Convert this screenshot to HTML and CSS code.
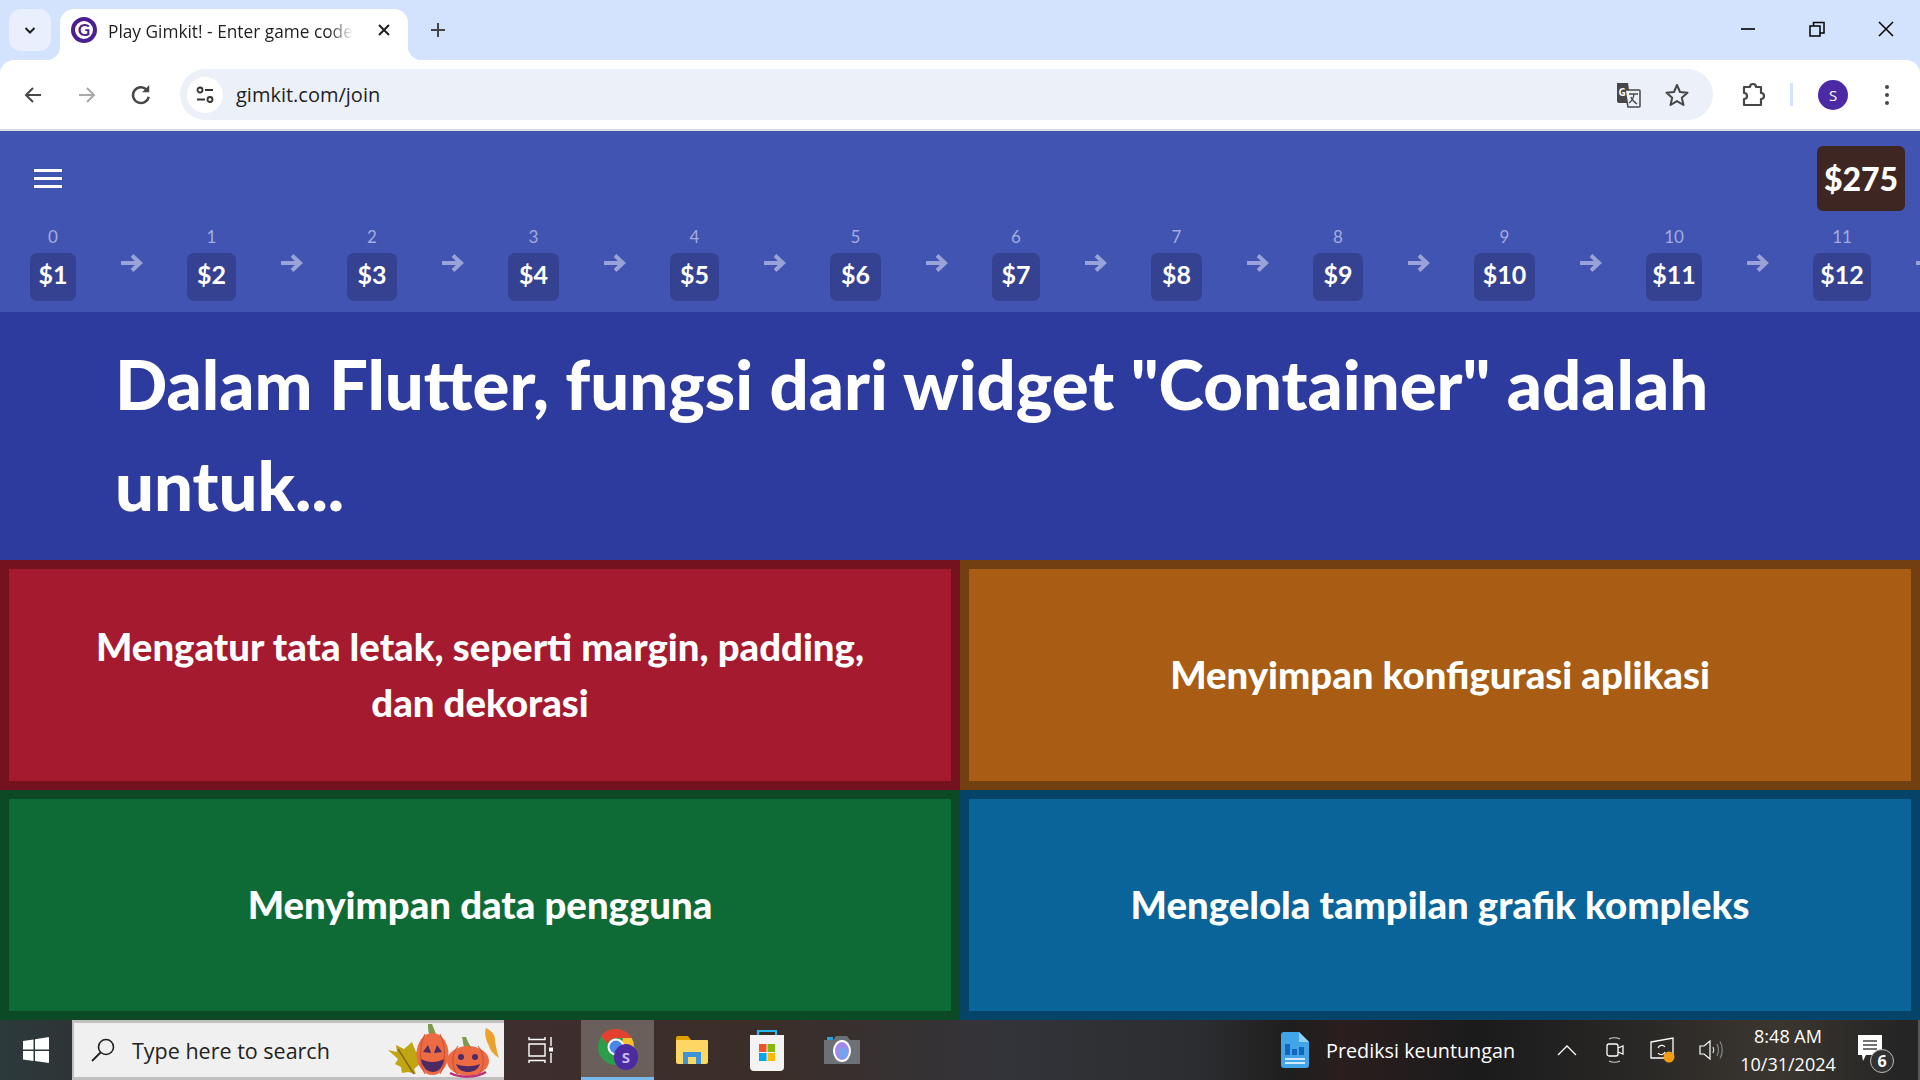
FILE: index.html
```html
<!DOCTYPE html>
<html>
<head lang="en">
    <meta charset="UTF-8">
    <title>Play Gimkit! - Enter game code</title>
    <link rel="stylesheet" href="styles.css">
</head>
<body>
<div id="browser">
  <div class="tabstrip">
    <div class="tab-search">
      <svg width="14" height="14" viewBox="0 0 14 14"><path d="M2.5 5l4.5 4.5L11.500 5" fill="none" stroke="#1f1f1f" stroke-width="2"/></svg>
    </div>
    <div class="tab">
      <svg class="favicon" width="26" height="26" viewBox="0 0 26 26">
        <circle cx="13" cy="13" r="11" fill="#fff" stroke="#4b1f8f" stroke-width="4"/>
        <text x="13" y="18.500" text-anchor="middle" class="favicon-g">G</text>
      </svg>
      <div class="tab-title">Play Gimkit! - Enter game code</div>
      <svg class="tab-close" width="14" height="14" viewBox="0 0 14 14"><path d="M2 2l10 10M12 2L2 12" stroke="#1f1f1f" stroke-width="2"/></svg>
    </div>
    <svg class="new-tab" width="18" height="18" viewBox="0 0 18 18"><path d="M9 2v14M2 9h14" stroke="#444" stroke-width="2"/></svg>
    <div class="win-controls">
      <div class="win-btn"><svg width="16" height="16" viewBox="0 0 16 16"><path d="M1 8h14" stroke="#000" stroke-width="1.600"/></svg></div>
      <div class="win-btn"><svg width="16" height="16" viewBox="0 0 16 16"><path d="M1 5h10v10H1zM4.500 5V1.500h10.500V12H11" fill="none" stroke="#000" stroke-width="1.500"/></svg></div>
      <div class="win-btn"><svg width="16" height="16" viewBox="0 0 16 16"><path d="M1 1l14 14M15 1L1 15" stroke="#000" stroke-width="1.500"/></svg></div>
    </div>
  </div>
  <div class="toolbar">
    <div class="nav-btn"><svg width="20" height="20" viewBox="0 0 20 20"><path d="M18 10H3M10 3l-7 7 7 7" fill="none" stroke="#474747" stroke-width="2"/></svg></div>
    <div class="nav-btn"><svg width="20" height="20" viewBox="0 0 20 20"><path d="M2 10h15M10 3l7 7-7 7" fill="none" stroke="#a8a8a8" stroke-width="2"/></svg></div>
    <div class="nav-btn"><svg width="22" height="22" viewBox="0 0 20 20"><path d="M17 11.500A7.200 7.200 0 1 1 15 5" fill="none" stroke="#474747" stroke-width="2.200"/><path d="M17.500 1v6.500H11z" fill="#474747"/></svg></div>
    <div class="omnibox">
      <div class="site-info">
        <svg width="20" height="20" viewBox="0 0 20 20"><circle cx="5" cy="5" r="2.500" fill="none" stroke="#333" stroke-width="1.800"/><path d="M10 5h8M2 14.500h8" stroke="#333" stroke-width="1.800"/><circle cx="15" cy="14.500" r="2.500" fill="none" stroke="#333" stroke-width="1.800"/></svg>
      </div>
      <div class="url">gimkit.com/join</div>
      <svg class="translate" width="26" height="26" viewBox="0 0 26 26">
        <path d="M2 1h11l3 20H4a2 2 0 0 1-2-2z" fill="#474747"/>
        <path d="M10 8h14a1 1 0 0 1 1 1v15a1 1 0 0 1-1 1H13z" fill="#ebf0f9" stroke="#474747" stroke-width="1.500"/>
        <text x="3.500" y="14" class="translate-g">G</text>
        <path d="M14 12h9M19 12c-.5 4-2 7-5 9M16 15c1 3 3 5 6 7" fill="none" stroke="#474747" stroke-width="1.300"/>
      </svg>
      <svg class="star" width="26" height="26" viewBox="0 0 26 26"><path d="M13 3l3 7 7.500.7-5.700 5 1.700 7.300-6.500-3.900L6.500 23l1.700-7.300-5.700-5L10 10z" fill="none" stroke="#474747" stroke-width="2" stroke-linejoin="round"/></svg>
    </div>
    <div class="extensions"><svg width="26" height="26" viewBox="0 0 26 26"><path d="M4 5h6a3 3 0 0 1 6 0h5v6a3 3 0 0 1 0 6v6H4v-6a3 3 0 0 0 0-6z" fill="none" stroke="#474747" stroke-width="2.200" stroke-linejoin="round"/></svg></div>
    <div class="toolbar-divider"></div>
    <div class="avatar">S</div>
    <div class="dots"><span></span><span></span><span></span></div>
  </div>
</div>

<div id="game">
  <div class="game-header">
    <div class="top-row">
      <div class="hamburger"><span></span><span></span><span></span></div>
      <div class="balance">$275</div>
    </div>
    <div class="ladder">
      <div class="step"><div class="level">0</div><div class="price w46">$1</div></div>
      <svg class="arrow" viewBox="0 0 23 20"><path d="M1 10h19M12 2.500l8 7.500-8 7.500" fill="none" stroke="#9aa3d8" stroke-width="4"/></svg>
      <div class="step"><div class="level">1</div><div class="price w49">$2</div></div>
      <svg class="arrow" viewBox="0 0 23 20"><path d="M1 10h19M12 2.500l8 7.500-8 7.500" fill="none" stroke="#9aa3d8" stroke-width="4"/></svg>
      <div class="step"><div class="level">2</div><div class="price w50">$3</div></div>
      <svg class="arrow" viewBox="0 0 23 20"><path d="M1 10h19M12 2.500l8 7.500-8 7.500" fill="none" stroke="#9aa3d8" stroke-width="4"/></svg>
      <div class="step"><div class="level">3</div><div class="price w51">$4</div></div>
      <svg class="arrow" viewBox="0 0 23 20"><path d="M1 10h19M12 2.500l8 7.500-8 7.500" fill="none" stroke="#9aa3d8" stroke-width="4"/></svg>
      <div class="step"><div class="level">4</div><div class="price w49">$5</div></div>
      <svg class="arrow" viewBox="0 0 23 20"><path d="M1 10h19M12 2.500l8 7.500-8 7.500" fill="none" stroke="#9aa3d8" stroke-width="4"/></svg>
      <div class="step"><div class="level">5</div><div class="price w51">$6</div></div>
      <svg class="arrow" viewBox="0 0 23 20"><path d="M1 10h19M12 2.500l8 7.500-8 7.500" fill="none" stroke="#9aa3d8" stroke-width="4"/></svg>
      <div class="step"><div class="level">6</div><div class="price w48">$7</div></div>
      <svg class="arrow" viewBox="0 0 23 20"><path d="M1 10h19M12 2.500l8 7.500-8 7.500" fill="none" stroke="#9aa3d8" stroke-width="4"/></svg>
      <div class="step"><div class="level">7</div><div class="price w51">$8</div></div>
      <svg class="arrow" viewBox="0 0 23 20"><path d="M1 10h19M12 2.500l8 7.500-8 7.500" fill="none" stroke="#9aa3d8" stroke-width="4"/></svg>
      <div class="step"><div class="level">8</div><div class="price w50">$9</div></div>
      <svg class="arrow" viewBox="0 0 23 20"><path d="M1 10h19M12 2.500l8 7.500-8 7.500" fill="none" stroke="#9aa3d8" stroke-width="4"/></svg>
      <div class="step"><div class="level">9</div><div class="price w61">$10</div></div>
      <svg class="arrow" viewBox="0 0 23 20"><path d="M1 10h19M12 2.500l8 7.500-8 7.500" fill="none" stroke="#9aa3d8" stroke-width="4"/></svg>
      <div class="step"><div class="level">10</div><div class="price w56">$11</div></div>
      <svg class="arrow" viewBox="0 0 23 20"><path d="M1 10h19M12 2.500l8 7.500-8 7.500" fill="none" stroke="#9aa3d8" stroke-width="4"/></svg>
      <div class="step"><div class="level">11</div><div class="price w58">$12</div></div>
      <svg class="arrow" viewBox="0 0 23 20"><path d="M1 10h19M12 2.500l8 7.500-8 7.500" fill="none" stroke="#9aa3d8" stroke-width="4"/></svg>
    </div>
  </div>
  <div class="question">Dalam Flutter, fungsi dari widget "Container" adalah untuk...</div>
  <div class="answers">
    <div class="answer red">Mengatur tata letak, seperti margin, padding, dan dekorasi</div>
    <div class="answer orange">Menyimpan konfigurasi aplikasi</div>
    <div class="answer green">Menyimpan data pengguna</div>
    <div class="answer blue">Mengelola tampilan grafik kompleks</div>
  </div>
</div>

<div id="taskbar">
  <div class="start">
    <svg width="26" height="26" viewBox="0 0 26 26"><path d="M0 4l10.500-1.500v10H0zM12 2.200L26 0v12.500H12zM0 14h10.500v10L0 22.500zM12 14h14v12l-14-2z" fill="#fff"/></svg>
  </div>
  <div class="search">
    <svg width="26" height="26" viewBox="0 0 26 26"><circle cx="16" cy="10" r="7.500" fill="none" stroke="#222" stroke-width="1.600"/><path d="M10.500 15.500L2 24" stroke="#222" stroke-width="1.800"/></svg>
    <div class="search-text">Type here to search</div>
    <svg class="pumpkins" width="116" height="64" viewBox="0 0 116 64">
      <path d="M0 33l9 2-1-7 8 4 8-7 4 10 4-2-2 10 3 3-7 6 2 5-8-2-6 1-1-6-6-3 3-5z" fill="#bfa612"/>
      <path d="M10 32l16 25" stroke="#8a6a1a" stroke-width="1.500"/>
      <path d="M98 11c6 3 10 8 9 13 1 6 2 11 4 17-6-4-9-8-10-12-3-6-5-12-3-18z" fill="#eda22e"/>
      <path d="M41 17c-1-4-1-7-1-10l4 0 2 5 2 5z" fill="#7d9b4a"/>
      <ellipse cx="44.500" cy="37" rx="16" ry="21" fill="#ec6b43"/>
      <path d="M37 17c-6 12-6 30 0 40M52 17c6 12 6 30 0 40" fill="none" stroke="#c94f2e" stroke-width="1"/>
      <path d="M35 35l5-7 3 8zM54 35l-5-7-3 8z" fill="#4d2a66"/>
      <path d="M33 42c7 4 16 4 23 0-1 9-6 13-11 13s-11-4-12-13z" fill="#4d2a66"/>
      <path d="M76 30c-1-3-1-6-2-10l4 0 2 5 3 5z" fill="#7d9b4a"/>
      <ellipse cx="80" cy="44" rx="21" ry="15" fill="#ec6b43"/>
      <path d="M70 29c-7 8-7 22 0 29M90 29c7 8 7 22 0 29" fill="none" stroke="#c94f2e" stroke-width="1"/>
      <circle cx="73" cy="40" r="3" fill="#4d2a66"/><circle cx="87" cy="40" r="3" fill="#4d2a66"/>
      <path d="M68 47c8 3 16 3 24 0-2 6-7 8-12 8s-10-2-12-8z" fill="#4d2a66"/>
      <path d="M62 56c10 5 26 5 36-1" stroke="#c0307a" stroke-width="2.500" fill="none"/>
    </svg>
  </div>
  <div class="task-btn task-view">
    <svg width="26" height="28" viewBox="0 0 26 28"><path d="M1 1v2.500h16V1M1 27v-2.500h16V27M1 8h16v12H1z" fill="none" stroke="#fff" stroke-width="1.400"/><path d="M23 1v9M23 17v10" stroke="#fff" stroke-width="1.400"/><rect x="21" y="11.500" width="4" height="4" fill="#fff"/></svg>
  </div>
  <div class="task-btn chrome-btn">
    <svg width="40" height="42" viewBox="0 0 40 42">
      <circle cx="18" cy="19" r="18" fill="#2c9e4b"/>
      <path d="M18 1a18 18 0 0 1 15.600 9H18a9 9 0 0 0-8.500 6L3 8A18 18 0 0 1 18 1z" fill="#e5402f"/>
      <path d="M33.600 10A18 18 0 0 1 30 33L22 26l3-16z" fill="#fbc02d"/>
      <circle cx="18" cy="19" r="8.500" fill="#fff"/>
      <circle cx="18" cy="19" r="6.500" fill="#4a86e8"/>
      <ellipse cx="28" cy="29" rx="12" ry="13" fill="#4c2aa0"/>
      <text x="28" y="35" text-anchor="middle" class="chrome-s">S</text>
    </svg>
  </div>
  <div class="task-btn folder-btn">
    <svg width="34" height="30" viewBox="0 0 34 30">
      <path d="M1 3a2 2 0 0 1 2-2h10l3 4H1z" fill="#e0a100"/>
      <path d="M1 5h31a1 1 0 0 1 1 1v21a2 2 0 0 1-2 2H3a2 2 0 0 1-2-2z" fill="#fdd663"/>
      <path d="M8 29V17h18v12h-5v-7h-8v7z" fill="#3d93d8"/>
    </svg>
  </div>
  <div class="task-btn store-btn">
    <svg width="36" height="42" viewBox="0 0 36 42">
      <path d="M9 9V2h18v7" fill="none" stroke="#2ab8f0" stroke-width="2.200"/>
      <path d="M1 6h34v32a4 4 0 0 1-4 4H5a4 4 0 0 1-4-4z" fill="#f3f3f3"/>
      <rect x="10" y="15" width="7.500" height="8" fill="#f0522a"/>
      <rect x="18.500" y="15" width="7.500" height="8" fill="#82b90a"/>
      <rect x="10" y="24" width="7.500" height="8" fill="#03a5f0"/>
      <rect x="18.500" y="24" width="7.500" height="8" fill="#ffb900"/>
    </svg>
  </div>
  <div class="task-btn camera-btn">
    <svg width="36" height="30" viewBox="0 0 36 30">
      <path d="M0 5h9l3-4h11l3 4h10v24H0z" fill="#6b7176"/>
      <rect x="3" y="2" width="6" height="3" fill="#2a9fd8"/>
      <ellipse cx="18" cy="16" rx="9" ry="11" fill="#fff"/>
      <ellipse cx="18" cy="16" rx="7" ry="9" fill="#a488ec"/>
      <ellipse cx="19" cy="18" rx="4" ry="6" fill="#70a7ea"/>
    </svg>
  </div>
  <div class="task-spacer"></div>
  <div class="app-title">
    <svg width="28" height="36" viewBox="0 0 28 36">
      <path d="M3 0h15l10 10v23a3 3 0 0 1-3 3H3a3 3 0 0 1-3-3V3a3 3 0 0 1 3-3z" fill="#42a5e8"/>
      <path d="M18 0l10 10H18z" fill="#8fd0f5"/>
      <rect x="4" y="12" width="5" height="11" fill="#1565c0"/><rect x="11" y="17" width="5" height="6" fill="#1565c0"/><rect x="18" y="15" width="5" height="8" fill="#1565c0"/>
      <path d="M4 27h20M4 31h20" stroke="#fff" stroke-width="1.500"/>
    </svg>
    <span>Prediksi keuntungan</span>
  </div>
  <div class="tray-btn"><svg width="20" height="12" viewBox="0 0 20 12"><path d="M1 11l9-9 9 9" fill="none" stroke="#fff" stroke-width="1.300"/></svg></div>
  <div class="tray-btn"><svg width="20" height="28" viewBox="0 0 20 28"><rect x="2" y="8" width="11" height="12" rx="2" fill="none" stroke="#fff" stroke-width="1.300"/><path d="M13 12l5-2v8l-5-2" fill="none" stroke="#fff" stroke-width="1.300"/><path d="M4 3c3-1.500 8-1.500 11 0M4 25c3 1.500 8 1.500 11 0" fill="none" stroke="#ccc" stroke-width="1.100"/></svg></div>
  <div class="tray-btn"><svg width="26" height="28" viewBox="0 0 26 28"><path d="M1 6l22-4v20H1z" fill="none" stroke="#fff" stroke-width="1.300"/><path d="M8 12a4 4 0 0 1 7-1M15 16a4 4 0 0 1-7 1" fill="none" stroke="#fff" stroke-width="1.200"/><circle cx="19" cy="21" r="5.500" fill="#f59b14"/></svg></div>
  <div class="tray-btn"><svg width="24" height="22" viewBox="0 0 24 22"><path d="M1 7h4l6-5v18l-6-5H1z" fill="none" stroke="#fff" stroke-width="1.200"/><path d="M14 8c1 2 1 4 0 6" fill="none" stroke="#ddd" stroke-width="1.200"/><path d="M18 5c2 4 2 8 0 12M21 2.500c3 5 3 12 0 17" fill="none" stroke="#888" stroke-width="1.200"/></svg></div>
  <div class="clock"><div>8:48 AM</div><div>10/31/2024</div></div>
  <div class="notify">
    <svg width="24" height="30" viewBox="0 0 24 30"><path d="M0 0h24v20H8l-3 6-1-6H0z" fill="#fff"/><path d="M5 6h14M5 10h14M5 14h14" stroke="#444" stroke-width="1.300"/></svg>
    <div class="notify-count">6</div>
  </div>
  <div class="task-end"></div>
</div>
</body>
</html>
```
FILE: styles.css
```css
*{
    margin:0;
    padding:0;
    box-sizing:border-box;
}
html,body{
    width:1920px;
    height:1080px;
    overflow:hidden;
}
body{
    font-family:"Lato","Noto Sans",sans-serif;
    background:#2e3b9e;
}
svg{
    display:block;
    flex:none;
}

/* browser chrome */
#browser{
    background:#d3e3fd;
    font-family:"Open Sans","Noto Sans",sans-serif;
}
.tabstrip{
    height:60px;
    display:flex;
    align-items:flex-start;
    padding:9px 0 0 9px;
}
.tab-search{
    width:42px;
    height:42px;
    background:#e9f0fd;
    border-radius:12px;
    display:flex;
    align-items:center;
    justify-content:center;
}
.tab{
    width:348px;
    height:51px;
    margin-left:9px;
    background:#fff;
    border-radius:14px 14px 0 0;
    display:flex;
    align-items:center;
    padding:0 0 9px 11px;
    position:relative;
}
.tab::before,.tab::after{
    content:"";
    position:absolute;
    bottom:0;
    width:14px;
    height:14px;
}
.tab::before{
    left:-14px;
    background:radial-gradient(circle at 0 0,transparent 14px,#fff 14.500px);
}
.tab::after{
    right:-14px;
    background:radial-gradient(circle at 100% 0,transparent 14px,#fff 14.500px);
}
.favicon-g{
    font:700 17px "Lato",sans-serif;
    fill:#4b1f8f;
}
.tab-title{
    width:245px;
    margin-left:11px;
    padding-top:2px;
    font-size:17.300px;
    color:#1f1f1f;
    white-space:nowrap;
    overflow:hidden;
    -webkit-mask-image:linear-gradient(to right,#000 90%,transparent);
    mask-image:linear-gradient(to right,#000 90%,transparent);
}
.tab-close{
    margin-left:24px;
}
.new-tab{
    margin:12px 0 0 21px;
}
.win-controls{
    margin-left:auto;
    margin-top:-9px;
    display:flex;
}
.win-btn{
    width:69px;
    height:58px;
    display:flex;
    align-items:center;
    justify-content:center;
}
.toolbar{
    height:71px;
    background:#fff;
    border-radius:14px 14px 0 0;
    border-bottom:2px solid #dadce0;
    display:flex;
    align-items:center;
    padding:0 0 0 11px;
}
.nav-btn{
    width:44px;
    height:44px;
    margin-right:10px;
    display:flex;
    align-items:center;
    justify-content:center;
}
.omnibox{
    width:1533px;
    height:51px;
    margin-left:7px;
    background:#ebf0f9;
    border-radius:26px;
    display:flex;
    align-items:center;
    padding-left:7px;
}
.site-info{
    width:36px;
    height:36px;
    border-radius:50%;
    background:#fff;
    display:flex;
    align-items:center;
    justify-content:center;
}
.url{
    margin-left:13px;
    font-size:20px;
    color:#1f1f1f;
}
.translate{
    margin-left:auto;
}
.translate-g{
    font:700 10px "Open Sans",sans-serif;
    fill:#fff;
}
.star{
    margin:0 23px 0 23px;
}
.extensions{
    margin-left:27px;
}
.toolbar-divider{
    width:3px;
    height:23px;
    margin-left:24px;
    background:#d3e3fd;
}
.avatar{
    width:30px;
    height:30px;
    margin-left:25px;
    border-radius:50%;
    background:#4d2aa5;
    color:#fff;
    font-size:15px;
    line-height:30px;
    text-align:center;
}
.dots{
    margin-left:37px;
    display:flex;
    flex-direction:column;
    gap:4px;
}
.dots span{
    width:4px;
    height:4px;
    border-radius:50%;
    background:#474747;
}

/* game */
.game-header{
    height:181px;
    background:#4254b1;
    overflow:hidden;
}
.top-row{
    height:97px;
    display:flex;
    justify-content:space-between;
    align-items:flex-start;
    padding:15px 15px 0 34px;
}
.hamburger{
    width:28px;
    margin-top:23px;
    display:flex;
    flex-direction:column;
    gap:5px;
}
.hamburger span{
    height:3px;
    background:#fff;
}
.balance{
    width:88px;
    height:65px;
    background:#3e2723;
    border-radius:6px;
    color:#fff;
    font-size:32px;
    font-weight:900;
    line-height:65px;
    text-align:center;
}
.ladder{
    display:flex;
    align-items:flex-start;
    padding-left:30px;
}
.step{
    display:flex;
    flex-direction:column;
    align-items:center;
    flex:none;
}
.level{
    height:18px;
    margin:0 0 7px;
    color:#a3acdf;
    font-size:17px;
    line-height:18px;
}
.price{
    height:48px;
    background:#354291;
    border-radius:7px;
    color:#fff;
    font-size:25px;
    font-weight:700;
    line-height:42px;
    text-align:center;
}
.w46{width:46px;}
.w48{width:48px;}
.w49{width:49px;}
.w50{width:50px;}
.w51{width:51px;}
.w56{width:56px;}
.w58{width:58px;}
.w61{width:61px;}
.arrow{
    width:23px;
    height:20px;
    margin:25px 44px 0;
}
.question{
    height:248px;
    padding:0 115px 4px;
    display:flex;
    align-items:center;
    background:#2e3b9e;
    color:#fff;
    font-size:68.850px;
    font-weight:900;
    line-height:101px;
}
.answers{
    display:grid;
    grid-template-columns:960px 960px;
    grid-template-rows:230px 230px;
}
.answer{
    border:9px solid;
    display:flex;
    align-items:center;
    justify-content:center;
    padding:0 70px 2px;
    color:#fff;
    font-size:38.300px;
    font-weight:900;
    line-height:56px;
    text-align:center;
}
.red{background:#a51a2e;border-color:#75121f;}
.orange{background:#a85c14;border-color:#723f10;}
.green{background:#0f6b36;border-color:#0b4a25;}
.blue{background:#086499;border-color:#054369;}

/* windows taskbar */
#taskbar{
    height:60px;
    display:flex;
    align-items:center;
    color:#fff;
    font-family:"Open Sans","Noto Sans",sans-serif;
    background:linear-gradient(to right,#2c3a3c 0,#2e3436 72px,#3e2e2e 510px,#3b2e28 760px,#33343a 1000px,#2c2d30 1200px,#1e1e1e 1290px,#2a1e1e 1340px,#1b1b1c 1480px,#2a2826 1640px,#3b362f 1780px,#252525 1900px);
}
.start{
    width:72px;
    height:60px;
    display:flex;
    align-items:center;
    justify-content:center;
}
.search{
    width:432px;
    height:60px;
    background:#f0f0f0;
    border:3px solid #c0c0c0;
    border-right:0;
    border-left:2px solid #c0c0c0;
    display:flex;
    align-items:center;
    padding-left:16px;
    color:#222;
}
.search-text{
    margin-left:16px;
    font-size:21.500px;
}
.pumpkins{
    margin-left:auto;
    margin-top:-2px;
}
.task-btn{
    height:60px;
    display:flex;
    align-items:center;
    justify-content:center;
}
.task-view{width:73px;}
.chrome-btn{
    width:73px;
    margin-left:4px;
    background:#6b5f5c;
    border-bottom:3px solid #76b9ed;
}
.chrome-s{
    font:700 15px "Open Sans",sans-serif;
    fill:#c9b8f0;
}
.folder-btn{width:76px;}
.store-btn{width:74px;}
.camera-btn{width:76px;}
.task-spacer{
    flex:1;
}
.app-title{
    width:262px;
    display:flex;
    align-items:center;
    gap:17px;
    font-size:19.800px;
}
.tray-btn{
    width:48px;
    display:flex;
    justify-content:center;
}
.clock{
    width:106px;
    font-size:18px;
    line-height:28px;
    text-align:center;
}
.notify{
    width:58px;
    height:60px;
    display:flex;
    align-items:center;
    justify-content:center;
    position:relative;
}
.notify-count{
    position:absolute;
    left:29px;
    top:29px;
    width:24px;
    height:24px;
    border:1px solid #bbb;
    border-radius:50%;
    background:#333;
    font-size:16px;
    font-weight:700;
    line-height:22px;
    text-align:center;
}
.task-end{
    width:21px;
    height:60px;
    border-right:2px solid #555;
}
```
